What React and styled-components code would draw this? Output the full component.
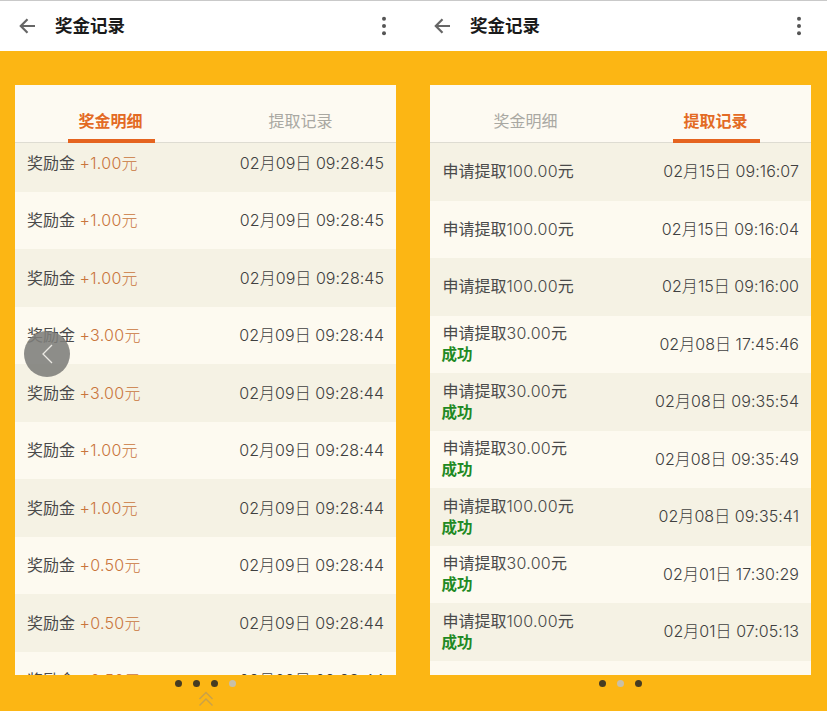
import React from "react";
import styled, { createGlobalStyle } from "styled-components";

const Global = createGlobalStyle`
  html, body { margin: 0; padding: 0; background: #fcb614; }
  body { font-family: "Liberation Sans", "Noto Sans CJK SC", sans-serif; }
  * { box-sizing: border-box; }
`;

const Page = styled.div`
  display: grid;
  grid-template-columns: 415px 412px;
  width: 827px;
  height: 711px;
  overflow: hidden;
`;

const Phone = styled.section`
  position: relative;
  display: flex;
  flex-direction: column;
  height: 711px;
  background: #fcb614;
`;

const Header = styled.header`
  display: flex;
  align-items: center;
  height: 51px;
  padding: 0 ${(p) => p.$right}px 0 ${(p) => p.$left}px;
  background: #fff;
  border-top: 1px solid #c9c9c9;
  flex: none;
`;

const Title = styled.h1`
  margin: 0 0 0 20px;
  flex: 1;
  font-size: 17.5px;
  font-weight: 700;
  color: #1a1a1a;
  line-height: 48px;
`;

const IconSvg = styled.svg`
  display: block;
  flex: none;
`;

const Card = styled.div`
  display: flex;
  flex-direction: column;
  width: 380.4px;
  height: 590px;
  margin: 34px 0 0 15.3px;
  background: #fdfaf0;
  overflow: hidden;
  flex: none;
`;

const Tabs = styled.div`
  display: flex;
  height: 58px;
  border-bottom: 1px solid #dedcd2;
  flex: none;
  background: #fdfaf2;
`;

const Tab = styled.div`
  position: relative;
  flex: 1;
  display: flex;
  justify-content: center;
  padding-top: 26px;
  font-size: 16px;
  line-height: 22px;
  font-weight: ${(p) => (p.$active ? 700 : 400)};
  color: ${(p) => (p.$active ? "#e36a24" : "#a9a8a2")};
  ${(p) =>
    p.$active &&
    `&::after {
      content: "";
      position: absolute;
      left: 52.3px;
      bottom: -1px;
      width: 87px;
      height: 4px;
      background: #e5641f;
    }`}
`;

const Viewport = styled.div`
  flex: 1;
  min-height: 0;
  overflow: hidden;
`;

const List = styled.div`
  margin-top: ${(p) => p.$offset}px;
`;

const Row = styled.div`
  display: flex;
  align-items: center;
  justify-content: space-between;
  height: 57.5px;
  padding: ${(p) => p.$nudge}px 11.7px 0 ${(p) => p.$pad}px;
  background: ${(p) => (p.$odd ? "#fdfaf0" : "#f5f2e4")};
  font-size: 16px;
  color: #4a4a4a;
`;

const Amount = styled.span`
  font-family: "Inter", "Noto Sans CJK SC", sans-serif;
  font-size: 16px;
  font-weight: 300;
  letter-spacing: 0.3px;
  color: #c9753c;
`;

const Num = styled.span`
  font-family: "Inter", sans-serif;
  font-size: 16px;
  font-weight: 300;
  letter-spacing: 0.3px;
`;

const Left = styled.div`
  display: flex;
  flex-direction: column;
`;

const Line = styled.div`
  line-height: 21px;
  white-space: pre;
`;

const Status = styled.div`
  margin-left: -1px;
  line-height: 21px;
  font-size: 15.5px;
  font-weight: 700;
  color: #1f8a24;
`;

const Time = styled.div`
  white-space: pre;
  font-family: "Inter", "Noto Sans CJK SC", sans-serif;
  font-size: 16px;
  font-weight: 300;
  letter-spacing: 0.05px;
  line-height: 21px;
  color: #404040;
`;

const Pager = styled.div`
  display: flex;
  justify-content: center;
  gap: 11.3px;
  margin-top: 4.5px;
  padding-right: ${(p) => p.$shift}px;
  flex: none;
`;

const Dot = styled.span`
  width: 7px;
  height: 7px;
  border-radius: 50%;
  background: ${(p) => (p.$on ? "#c8c0a8" : "#463c22")};
`;

const Chevrons = styled.svg`
  position: absolute;
  left: 198px;
  top: 691px;
`;

const Floating = styled.div`
  position: absolute;
  left: 24px;
  top: 331px;
  width: 46px;
  height: 46px;
  border-radius: 50%;
  background: rgba(125, 125, 122, 0.88);
  display: flex;
  align-items: center;
  justify-content: center;
`;

const Back = () => (
  <IconSvg width="16" height="16" viewBox="0 0 16 16" fill="none" stroke="#666" strokeWidth="2.2">
    <path d="M16 8H2M8.5 1.2 1.8 8l6.7 6.8" />
  </IconSvg>
);

const More = () => (
  <IconSvg width="6" height="20" viewBox="0 0 6 20" fill="#555">
    <circle cx="3" cy="2.8" r="2" />
    <circle cx="3" cy="10" r="2" />
    <circle cx="3" cy="17.2" r="2" />
  </IconSvg>
);

const bonus = [
  ["+1.00元", "02月09日 09:28:45"],
  ["+1.00元", "02月09日 09:28:45"],
  ["+1.00元", "02月09日 09:28:45"],
  ["+3.00元", "02月09日 09:28:44"],
  ["+3.00元", "02月09日 09:28:44"],
  ["+1.00元", "02月09日 09:28:44"],
  ["+1.00元", "02月09日 09:28:44"],
  ["+0.50元", "02月09日 09:28:44"],
  ["+0.50元", "02月09日 09:28:44"],
  ["+0.50元", "02月09日 09:28:44"],
];

const withdrawals = [
  ["100.00", "02月15日 09:16:07", false],
  ["100.00", "02月15日 09:16:04", false],
  ["100.00", "02月15日 09:16:00", false],
  ["30.00", "02月08日 17:45:46", true],
  ["30.00", "02月08日 09:35:54", true],
  ["30.00", "02月08日 09:35:49", true],
  ["100.00", "02月08日 09:35:41", true],
  ["30.00", "02月01日 17:30:29", true],
  ["100.00", "02月01日 07:05:13", true],
];

export default function App() {
  return (
    <Page>
      <Global />
      <Phone>
        <Header $left={19} $right={28}>
          <Back />
          <Title>奖金记录</Title>
          <More />
        </Header>
        <Card>
          <Tabs>
            <Tab $active>奖金明细</Tab>
            <Tab>提取记录</Tab>
          </Tabs>
          <Viewport>
            <List $offset={-8.8}>
              {bonus.map(([amount, time], i) => (
                <Row key={i} $odd={i % 2 === 1} $pad={11.7} $nudge={1}>
                  <Line>
                    奖励金 <Amount>{amount}</Amount>
                  </Line>
                  <Time>{time}</Time>
                </Row>
              ))}
            </List>
          </Viewport>
        </Card>
        <Pager $shift={4}>
          <Dot />
          <Dot />
          <Dot />
          <Dot $on />
        </Pager>
        <Chevrons width="16" height="16" viewBox="0 0 16 16" fill="none" stroke="#c9a14a" strokeWidth="1.4">
          <path d="M1.5 8 8 1.5 14.5 8M1.5 14.5 8 8l6.5 6.5" />
        </Chevrons>
        <Floating>
          <IconSvg width="14" height="22" viewBox="0 0 14 22" fill="none" stroke="#eceae4" strokeWidth="1.3">
            <path d="M12 2 3 11l9 9" />
          </IconSvg>
        </Floating>
      </Phone>
      <Phone>
        <Header $left={19} $right={25}>
          <Back />
          <Title>奖金记录</Title>
          <More />
        </Header>
        <Card>
          <Tabs>
            <Tab>奖金明细</Tab>
            <Tab $active>提取记录</Tab>
          </Tabs>
          <Viewport>
            <List $offset={0}>
              {withdrawals.map(([value, time, ok], i) => (
                <Row key={i} $odd={i % 2 === 1} $pad={12.2} $nudge={0}>
                  <Left>
                    <Line>
                      申请提取<Num>{value}</Num>元
                    </Line>
                    {ok && <Status>成功</Status>}
                  </Left>
                  <Time>{time}</Time>
                </Row>
              ))}
            </List>
          </Viewport>
        </Card>
        <Pager $shift={1}>
          <Dot />
          <Dot $on />
          <Dot />
        </Pager>
      </Phone>
    </Page>
  );
}
